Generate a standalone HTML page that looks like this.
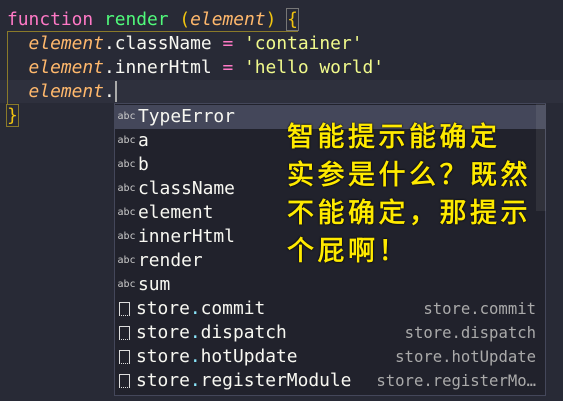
<!DOCTYPE html>
<html><head><meta charset="utf-8"><style>
body{margin:0;width:563px;height:401px;background:#282a36;overflow:hidden;position:relative;font-family:"DejaVu Sans Mono","Liberation Mono",monospace}
.l{position:absolute;left:7px;height:24px;line-height:24px;font-size:17.9px;color:#f8f8f2;white-space:pre}
.k{color:#ff79c6}.f{color:#50fa7b}.p{color:#ffb86c;font-style:italic}.s{color:#f1fa8c}.y{color:#f1c40f}
#cur{position:absolute;left:0;top:80px;width:563px;height:23px;background:#2e303d}
#box{position:absolute;left:7px;top:31px;width:290px;height:72px;border:1px solid #8a7a2a;border-right:none;border-bottom:none}
#pop{position:absolute;left:114px;top:103px;width:432px;height:293px;background:#21222c;border:1px solid #44475a;box-sizing:border-box}
.r{position:absolute;left:0;width:432px;height:24px;line-height:24px;font-size:17.9px;color:#f8f8f2;white-space:pre}
.r .i{display:inline-block;width:23px;font-size:10px;color:#ccc;text-align:center;vertical-align:middle;line-height:24px}
.r .sq{display:inline-block;width:11px;height:14px;border:1px solid #ddd;border-bottom:1px dotted #ddd;margin:0 6px 0 4px;vertical-align:-2px;box-sizing:border-box}
.r .d{position:absolute;right:11px;top:0;color:#aaa;font-size:15.6px}
.dot{color:#8be9fd}
#sel{position:absolute;left:0;top:1px;width:430px;height:24px;background:#44475a}
#thumb{position:absolute;left:421px;top:0;width:10px;height:107px;background:rgba(255,255,255,0.07)}
#cn{position:absolute;left:287px;top:116px;font-family:"WenQuanYi Zen Hei","Noto Sans CJK SC",sans-serif;font-size:27px;line-height:38px;color:#ffea00;letter-spacing:3.5px;-webkit-text-stroke:0.7px #ffea00;text-shadow:0 0 2px #000,0 0 2px #000,0 0 1px #000}
</style></head><body>
<div id="cur"></div>
<div id="box"></div>
<div class="l" style="top:8px"><span class="k">function</span> <span class="f">render</span> <span class="y">(</span><span class="p">element</span><span class="y">)</span> <span class="y" style="outline:1px solid #777">{</span></div>
<div class="l" style="top:32px">  <span class="p">element</span>.className <span class="k">=</span> <span class="s">'container'</span></div>
<div class="l" style="top:56px">  <span class="p">element</span>.innerHtml <span class="k">=</span> <span class="s">'hello world'</span></div>
<div class="l" style="top:80px">  <span class="p">element</span>.<span style="border-left:2px solid #aaa"> </span></div>
<div class="l" style="top:104px"><span class="y" style="outline:1px solid #8a7a2a">}</span></div>
<div id="pop">
<div id="sel"></div>
<div id="thumb"></div>
<div class="r" style="top:1px"><span class="i">abc</span>TypeError</div>
<div class="r" style="top:25px"><span class="i">abc</span>a</div>
<div class="r" style="top:49px"><span class="i">abc</span>b</div>
<div class="r" style="top:73px"><span class="i">abc</span>className</div>
<div class="r" style="top:97px"><span class="i">abc</span>element</div>
<div class="r" style="top:121px"><span class="i">abc</span>innerHtml</div>
<div class="r" style="top:145px"><span class="i">abc</span>render</div>
<div class="r" style="top:169px"><span class="i">abc</span>sum</div>
<div class="r" style="top:193px"><span class="sq"></span>store<span class="dot">.</span>commit<span class="d">store.commit</span></div>
<div class="r" style="top:217px"><span class="sq"></span>store<span class="dot">.</span>dispatch<span class="d">store.dispatch</span></div>
<div class="r" style="top:241px"><span class="sq"></span>store<span class="dot">.</span>hotUpdate<span class="d">store.hotUpdate</span></div>
<div class="r" style="top:265px"><span class="sq"></span>store<span class="dot">.</span>registerModule<span class="d">store.registerMo…</span></div>
</div>
<div id="cn">智能提示能确定<br>实参是什么？既然<br>不能确定，那提示<br>个屁啊！</div>
</body></html>
